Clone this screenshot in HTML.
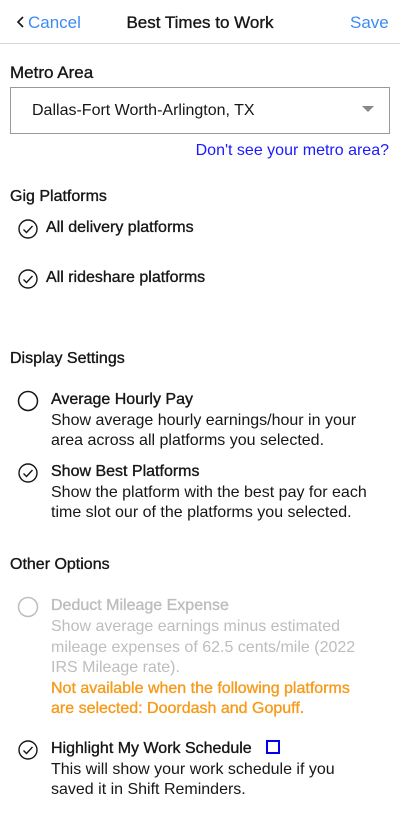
<!DOCTYPE html>
<html><head><meta charset="utf-8"><style>
*{margin:0;padding:0;box-sizing:border-box}
body{width:400px;height:816px;background:#fff;font-family:"Liberation Sans",sans-serif;color:#161616;position:relative;overflow:hidden;font-size:16px}
.a{position:absolute;white-space:nowrap;line-height:20px;margin-top:1px}
.m{-webkit-text-stroke:0.35px currentColor}
.g{color:#bdbdbd}
.o{color:#f79a1a}
svg{position:absolute}
</style></head><body>
<svg style="left:16px;top:15px" width="10" height="14" viewBox="0 0 10 14"><path d="M7 2L2 7l5 5" fill="none" stroke="#161616" stroke-width="1.6"/></svg>
<div class="a" style="left:28px;top:12px;color:#3d8bf2;font-size:17px">Cancel</div>
<div class="a m" style="left:0;width:400px;text-align:center;top:12px;font-size:17px">Best Times to Work</div>
<div class="a" style="left:350px;top:12px;color:#3d8bf2;font-size:17px">Save</div>
<div style="position:absolute;left:0;top:43px;width:400px;height:1px;background:#d8d8d8"></div>
<div class="a m" style="left:10px;top:62px;font-size:17px">Metro Area</div>
<div style="position:absolute;left:10px;top:87px;width:380px;height:47px;border:1px solid #999"></div>
<div class="a" style="left:32px;top:100px;font-size:16px">Dallas-Fort Worth-Arlington, TX</div>
<svg style="left:362px;top:106px" width="12" height="7"><path d="M0 0h12L6 6z" fill="#888"/></svg>
<div class="a" style="right:11px;top:140px;color:#1a1aff">Don't see your metro area?</div>
<div class="a m" style="left:10px;top:186px">Gig Platforms</div>
<svg style="left:17px;top:218px" width="22" height="22"><circle cx="11" cy="11" r="9" fill="none" stroke="#161616" stroke-width="1.4"/><path d="M6.5 11.5l3 3 6-6.5" fill="none" stroke="#161616" stroke-width="1.4"/></svg>
<div class="a m" style="left:46px;top:217px">All delivery platforms</div>
<svg style="left:17px;top:268px" width="22" height="22"><circle cx="11" cy="11" r="9" fill="none" stroke="#161616" stroke-width="1.4"/><path d="M6.5 11.5l3 3 6-6.5" fill="none" stroke="#161616" stroke-width="1.4"/></svg>
<div class="a m" style="left:46px;top:267px">All rideshare platforms</div>
<div class="a m" style="left:10px;top:348px">Display Settings</div>
<svg style="left:17px;top:390px" width="22" height="22"><circle cx="11" cy="11" r="9.5" fill="none" stroke="#161616" stroke-width="1.5"/></svg>
<div class="a m" style="left:51px;top:389px">Average Hourly Pay</div>
<div class="a" style="left:51px;top:410px">Show average hourly earnings/hour in your</div>
<div class="a" style="left:51px;top:430px">area across all platforms you selected.</div>
<svg style="left:17px;top:462px" width="22" height="22"><circle cx="11" cy="11" r="9" fill="none" stroke="#161616" stroke-width="1.4"/><path d="M6.5 11.5l3 3 6-6.5" fill="none" stroke="#161616" stroke-width="1.4"/></svg>
<div class="a m" style="left:51px;top:461px">Show Best Platforms</div>
<div class="a" style="left:51px;top:482px">Show the platform with the best pay for each</div>
<div class="a" style="left:51px;top:502px">time slot our of the platforms you selected.</div>
<div class="a m" style="left:10px;top:554px">Other Options</div>
<svg style="left:17px;top:596px" width="22" height="22"><circle cx="11" cy="11" r="9.5" fill="none" stroke="#bdbdbd" stroke-width="1.5"/></svg>
<div class="a m g" style="left:51px;top:595px">Deduct Mileage Expense</div>
<div class="a g" style="left:51px;top:616px">Show average earnings minus estimated</div>
<div class="a g" style="left:51px;top:637px">mileage expenses of 62.5 cents/mile (2022</div>
<div class="a g" style="left:51px;top:657px">IRS Mileage rate).</div>
<div class="a o m" style="left:51px;top:678px">Not available when the following platforms</div>
<div class="a o m" style="left:51px;top:698px">are selected: Doordash and Gopuff.</div>
<svg style="left:17px;top:739px" width="22" height="22"><circle cx="11" cy="11" r="9" fill="none" stroke="#161616" stroke-width="1.4"/><path d="M6.5 11.5l3 3 6-6.5" fill="none" stroke="#161616" stroke-width="1.4"/></svg>
<div class="a m" style="left:51px;top:738px">Highlight My Work Schedule</div>
<div style="position:absolute;left:266px;top:740px;width:14px;height:14px;border:2px solid #0000ee"></div>
<div class="a" style="left:51px;top:759px">This will show your work schedule if you</div>
<div class="a" style="left:51px;top:779px">saved it in Shift Reminders.</div>
</body></html>
